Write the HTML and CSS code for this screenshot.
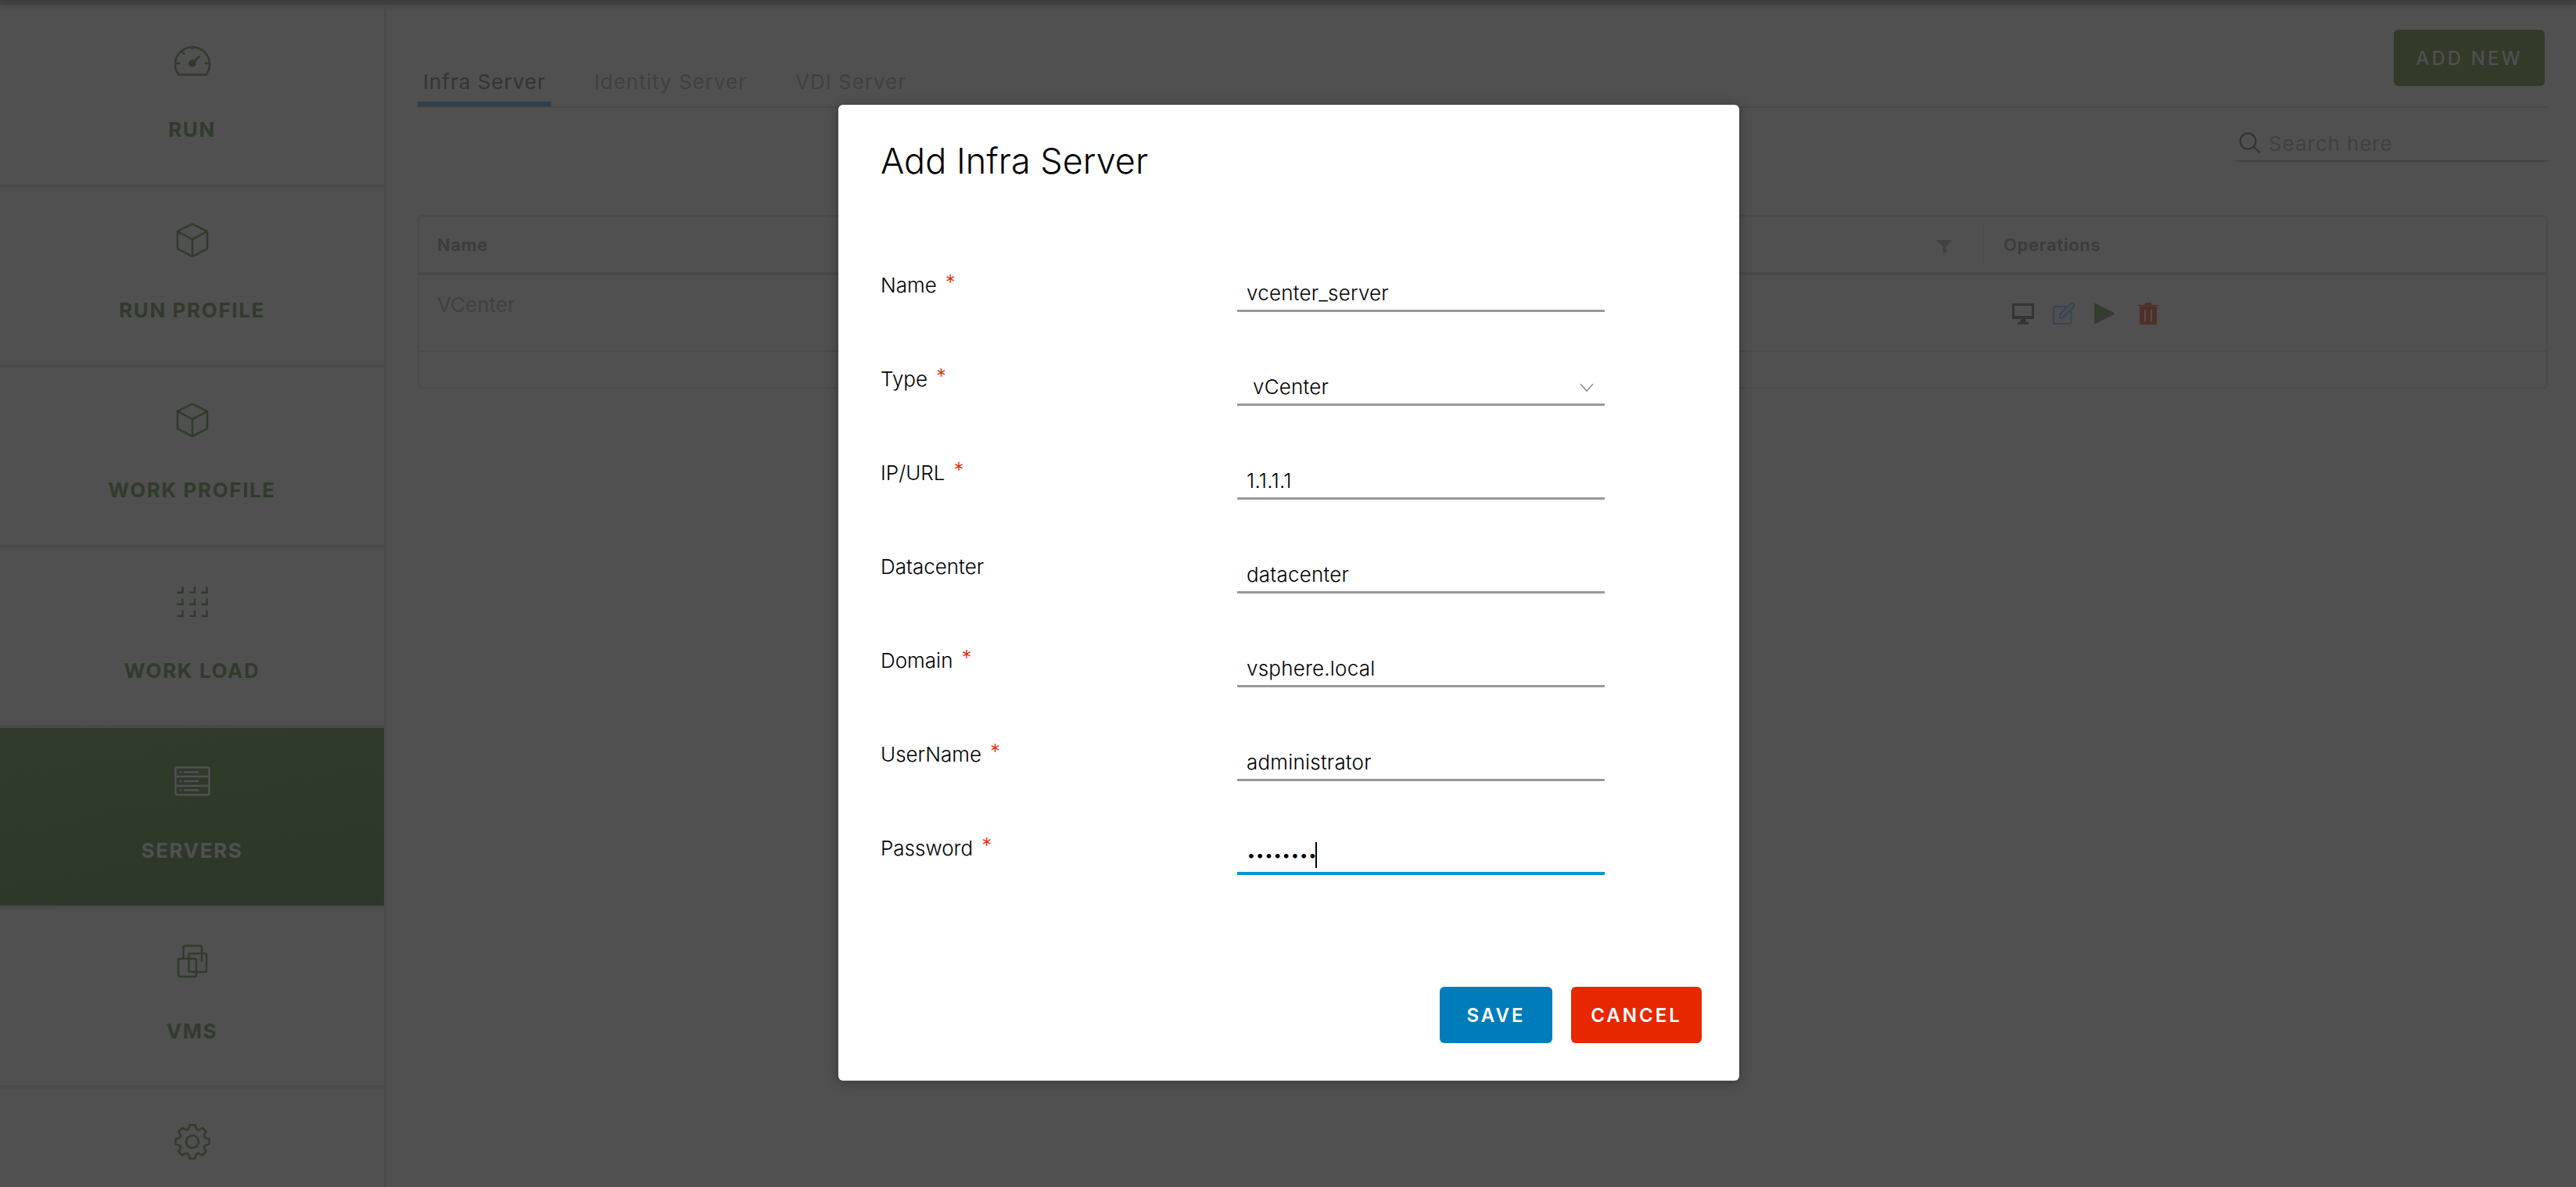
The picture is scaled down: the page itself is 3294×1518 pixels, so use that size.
FILE: index.html
```html
<!DOCTYPE html>
<html lang="en">
<head>
    <meta charset="UTF-8">
    <meta name="viewport" content="width=device-width, initial-scale=1.0">
    <title>Add Infra Server</title>
    <link rel="stylesheet" href="styles.css">
</head>
<body>
    <div class="topbar"></div>
    <div class="layout">
        <nav class="sidebar">
            <a class="nav-item">
                <svg class="nav-icon" viewBox="0 0 48 48"><path d="M6.5 42.5A22 22 0 1 1 41.5 42.5Z"/><path d="M24 5.5V10M2 28H8.5M39.500 28H46M10.500 12.500L14 16.500M24 28L33.500 18.500"/><circle class="dot" cx="24" cy="28" r="3.500"/></svg>
                <span class="nav-label">RUN</span>
            </a>
            <a class="nav-item">
                <svg class="nav-icon" viewBox="0 0 48 48"><path d="M24 2.500L43 12V34L24 44L5 34V12Z"/><path d="M5 12L24 22L43 12M24 22V44"/></svg>
                <span class="nav-label">RUN PROFILE</span>
            </a>
            <a class="nav-item">
                <svg class="nav-icon" viewBox="0 0 48 48"><path d="M24 2.500L43 12V34L24 44L5 34V12Z"/><path d="M5 12L24 22L43 12M24 22V44"/></svg>
                <span class="nav-label">WORK PROFILE</span>
            </a>
            <a class="nav-item">
                <svg class="nav-icon" viewBox="0 0 48 48"><path d="M4.500 12.700H11.500V5.500M20 12.700H27V5.500M35.500 12.700H42.500V5.500M4.500 27.700H11.500V20.500M20 27.700H27V20.500M35.500 27.700H42.500V20.500M4.500 42.700H11.500V35.500M20 42.700H27V35.500M35.500 42.700H42.500V35.500"/></svg>
                <span class="nav-label">WORK LOAD</span>
            </a>
            <a class="nav-item active">
                <svg class="nav-icon" viewBox="0 0 48 48"><rect x="2.500" y="6.500" width="43" height="35" rx="2"/><path d="M2.500 18H45.500M2.500 30H45.500M13 12.500H32M13 24H32M13 35.500H32"/><path d="M7.500 12.500H10M7.500 24H10M7.500 35.500H10"/></svg>
                <span class="nav-label">SERVERS</span>
            </a>
            <a class="nav-item">
                <svg class="nav-icon" viewBox="0 0 48 48"><rect x="6" y="20" width="23" height="23" rx="2.500"/><path d="M12.500 20V6A2.500 2.500 0 0 1 15 3.500H33.500A2.500 2.500 0 0 1 36 6V13"/><path d="M19.500 13.500H40A2 2 0 0 1 42 15.500V35A2 2 0 0 1 40 37H22A2.500 2.500 0 0 1 19.500 34.500V13.500M36 13.500V24"/></svg>
                <span class="nav-label">VMS</span>
            </a>
            <a class="nav-item">
                <svg class="nav-icon" viewBox="0 0 48 48">
                    <circle cx="24" cy="24" r="8"/>
                    <g transform="translate(24 24)">
                        <path id="tooth" d="M-6.500 -15L-4.800 -16.500L-3.200 -21.500H3.200L4.800 -16.500L6.500 -15"/>
                        <use href="#tooth" transform="rotate(45)"/>
                        <use href="#tooth" transform="rotate(90)"/>
                        <use href="#tooth" transform="rotate(135)"/>
                        <use href="#tooth" transform="rotate(180)"/>
                        <use href="#tooth" transform="rotate(225)"/>
                        <use href="#tooth" transform="rotate(270)"/>
                        <use href="#tooth" transform="rotate(315)"/>
                    </g>
                </svg>
            </a>
        </nav>

        <main class="content">
            <div class="tabs">
                <a class="tab selected">Infra Server</a>
                <a class="tab">Identity Server</a>
                <a class="tab">VDI Server</a>
                <button class="add-btn" type="button">ADD NEW</button>
            </div>

            <div class="search-row">
                <label class="search">
                    <svg class="search-icon" viewBox="0 0 30 28"><circle cx="12.500" cy="11.500" r="10"/><path d="M20 19L28 26.500"/></svg>
                    <input type="text" placeholder="Search here">
                </label>
            </div>

            <table class="grid">
                <thead>
                    <tr>
                        <th>Name</th>
                        <th class="filter-cell">
                            <svg class="filter-icon" viewBox="0 0 20 16"><path d="M0 0H20L13 8V16H8V8Z"/></svg>
                        </th>
                        <th class="ops-cell"><span class="ops-head">Operations</span></th>
                    </tr>
                </thead>
                <tbody>
                    <tr class="data-row">
                        <td>VCenter</td>
                        <td></td>
                        <td class="ops-cell">
                            <div class="ops">
                                <svg class="op" viewBox="0 0 28 28"><path fill="#343434" fill-rule="evenodd" d="M1 1H27A1 1 0 0 1 28 2V20A1 1 0 0 1 27 21H1A1 1 0 0 1 0 20V2A1 1 0 0 1 1 1ZM3 4V17H25V4Z"/><path fill="#343434" d="M11 21H17L18 25H21V28H7V25H10Z"/></svg>
                                <svg class="op" viewBox="0 0 28 28"><path fill="none" stroke="#344452" stroke-width="2" d="M17 5H2.500A1.500 1.500 0 0 0 1 6.500V25.500A1.500 1.500 0 0 0 2.500 27H22A1.500 1.500 0 0 0 23.500 25.500V11"/><path fill="none" stroke="#344452" stroke-width="2" d="M9 15L22.500 1.500A2 2 0 0 1 26.500 5.500L13 19L9 20Z"/></svg>
                                <svg class="op" viewBox="0 0 28 28"><path fill="#353c31" stroke="#353c31" stroke-width="2" stroke-linejoin="round" d="M2 2L26 14L2 26Z"/></svg>
                                <svg class="op trash" viewBox="0 0 28 28"><path fill="#4f2f29" fill-rule="evenodd" d="M3 5H25V26A2 2 0 0 1 23 28H5A2 2 0 0 1 3 26ZM9 9V24H11V9ZM17 9V24H19V9Z"/><path fill="#4f2f29" d="M1 3H9.500V1.500A1.500 1.500 0 0 1 11 0H17A1.500 1.500 0 0 1 18.500 1.500V3H27V4.500H1Z"/></svg>
                            </div>
                        </td>
                    </tr>
                    <tr class="empty-row"><td colspan="3"></td></tr>
                </tbody>
            </table>
        </main>
    </div>

    <div class="modal">
        <h3 class="modal-title">Add Infra Server</h3>
        <form class="modal-form">
            <div class="row">
                <label class="row-label required" for="name">Name</label>
                <input class="field" id="name" type="text" value="vcenter_server">
            </div>
            <div class="row">
                <label class="row-label required" for="type">Type</label>
                <div class="select-wrap">
                    <select class="field select" id="type">
                        <option>vCenter</option>
                    </select>
                    <svg class="chevron" viewBox="0 0 18 11"><path d="M1 1L9 10L17 1"/></svg>
                </div>
            </div>
            <div class="row">
                <label class="row-label required" for="url">IP/URL</label>
                <input class="field" id="url" type="text" value="1.1.1.1">
            </div>
            <div class="row">
                <label class="row-label" for="datacenter">Datacenter</label>
                <input class="field" id="datacenter" type="text" value="datacenter">
            </div>
            <div class="row">
                <label class="row-label required" for="domain">Domain</label>
                <input class="field" id="domain" type="text" value="vsphere.local">
            </div>
            <div class="row">
                <label class="row-label required" for="username">UserName</label>
                <input class="field" id="username" type="text" value="administrator">
            </div>
            <div class="row">
                <label class="row-label required" for="password">Password</label>
                <div class="password-wrap">
                    <input class="field password" id="password" type="password" value="password">
                    <span class="caret"></span>
                </div>
            </div>
        </form>
        <div class="modal-footer">
            <button class="btn save" type="button">SAVE</button>
            <button class="btn cancel" type="button">CANCEL</button>
        </div>
    </div>
</body>
</html>
```

FILE: styles.css
```css
/* Page behind the dialog, already drawn in its dimmed colours */
html,
body {
    height: 100%;
}

body {
    margin: 0;
    font-family: "Inter", "Liberation Sans", sans-serif;
    background-color: #505050;
    overflow: hidden;
    position: relative;
}

.topbar {
    height: 6px;
    background-color: #3f3f3f;
    box-shadow: 0 2px 6px rgba(0, 0, 0, 0.2);
}

.layout {
    display: flex;
    height: calc(100% - 6px);
}

/* Sidebar */
.sidebar {
    width: 491px;
    padding-top: 3px;
    border-right: 3px solid #4a4a4a;
    flex-shrink: 0;
    box-sizing: content-box;
    overflow: hidden;
}

.nav-item {
    display: flex;
    flex-direction: column;
    align-items: center;
    height: 226.5px;
    padding-top: 44px;
    box-sizing: border-box;
    margin-bottom: 4px;
    box-shadow: 0 4px 0 #4a4a4a;
    color: #303b2c;
}

.nav-item.active {
    background: linear-gradient(170deg, #303b2b, #2d3729);
    color: #505050;
}

.nav-icon {
    width: 48px;
    height: 48px;
    flex-shrink: 0;
    fill: none;
    stroke: currentColor;
    stroke-width: 2.500;
}

.nav-icon .dot {
    fill: currentColor;
}

.nav-label {
    margin-top: 50px;
    font-size: 26px;
    line-height: 30px;
    font-weight: 700;
    letter-spacing: 1.600px;
}

/* Main area */
.content {
    flex: 1;
    padding: 0 36px 0 40px;
    min-width: 0;
}

.tabs {
    display: flex;
    align-items: flex-end;
    gap: 48px;
    height: 130px;
    border-bottom: 2px solid #484848;
}

.tab {
    padding: 0 7px;
    height: 62px;
    line-height: 62px;
    box-sizing: border-box;
    font-size: 26px;
    letter-spacing: 1px;
    color: #404040;
}

.tab.selected {
    color: #343434;
    border-bottom: 6px solid #2f3f4b;
}

.add-btn {
    margin-left: auto;
    margin-right: 4px;
    align-self: flex-start;
    margin-top: 32px;
    width: 193px;
    height: 72px;
    border: none;
    border-radius: 6px;
    background-color: #323b2a;
    color: #505050;
    font-family: inherit;
    font-size: 24px;
    font-weight: 500;
    letter-spacing: 3.100px;
}

.search-row {
    display: flex;
    justify-content: flex-end;
    margin-top: 23px;
}

.search {
    display: flex;
    align-items: center;
    gap: 9px;
    width: 399px;
    height: 46px;
    padding-left: 3px;
    box-sizing: border-box;
    border-bottom: 2px solid #434343;
}

.search-icon {
    width: 30px;
    height: 28px;
    fill: none;
    stroke: #333;
    stroke-width: 2;
}

.search input {
    flex: 1;
    min-width: 0;
    border: none;
    background: transparent;
    outline: none;
    padding: 0;
    font-family: inherit;
    font-size: 26px;
    letter-spacing: 0.900px;
}

.search input::placeholder {
    color: #404040;
}

/* Table */
.grid {
    width: 100%;
    margin-top: 68px;
    border-collapse: separate;
    border-spacing: 0;
    border: 2px solid #4a4a4a;
    border-radius: 6px;
    color: #404040;
}

.grid th {
    height: 75px;
    padding: 0 0 0 23px;
    box-sizing: border-box;
    border-bottom: 4px solid #484848;
    text-align: left;
    font-size: 22px;
    font-weight: 600;
    letter-spacing: 0.700px;
    color: #3b3b3b;
}

.grid td {
    padding: 0 0 0 23px;
    font-size: 26px;
}

.filter-cell {
    text-align: right !important;
    padding-right: 40px !important;
}

.filter-icon {
    width: 20px;
    height: 16px;
    fill: #424242;
    vertical-align: middle;
}

.grid .ops-cell {
    width: 720px;
    padding-left: 0;
}

.ops-head {
    display: block;
    height: 48px;
    line-height: 48px;
    padding-left: 25px;
    border-left: 1px solid #4a4a4a;
}

.data-row td {
    height: 98px;
    padding-top: 22px;
    padding-bottom: 0;
    box-sizing: border-box;
    vertical-align: top;
    border-bottom: 2px solid #4a4a4a;
}

.ops {
    display: flex;
    gap: 24px;
    padding-left: 37px;
    margin-top: 13px;
}

.op {
    width: 28px;
    height: 28px;
}

.trash {
    margin-left: 4px;
}

.empty-row td {
    height: 45px;
}

/* Dialog */
.modal {
    position: absolute;
    left: 1072px;
    top: 134px;
    width: 1152px;
    height: 1248px;
    padding: 45px 0 48px 54px;
    box-sizing: border-box;
    display: flex;
    flex-direction: column;
    background-color: #fff;
    border-radius: 6px;
    box-shadow: 0 2px 16px rgba(0, 0, 0, 0.3);
    color: #000;
}

.modal-title {
    margin: 0;
    font-size: 45px;
    line-height: 54px;
    font-weight: 300;
}

.modal-form {
    margin-top: 107px;
}

.row {
    display: grid;
    grid-template-columns: 456px 470px;
    height: 120px;
}

.row-label {
    font-size: 26px;
    font-weight: 350;
    line-height: 50px;
    height: 50px;
}

.required::after {
    content: "*";
    color: #e62700;
    margin-left: 11px;
    position: relative;
    top: -4px;
}

.field {
    display: block;
    width: 100%;
    height: 59px;
    padding: 12px 0 0 12px;
    box-sizing: border-box;
    border: none;
    border-bottom: 3px solid #999;
    border-radius: 0;
    background: transparent;
    outline: none;
    font-family: inherit;
    font-size: 26px;
    font-weight: 350;
    letter-spacing: 0.200px;
    color: #000;
}

.select-wrap,
.password-wrap {
    position: relative;
    height: 59px;
}

.select {
    appearance: none;
    padding-left: 20px;
}

.chevron {
    position: absolute;
    right: 14px;
    top: 30px;
    width: 18px;
    height: 11px;
    fill: none;
    stroke: #8c8c8c;
    stroke-width: 1.500;
}

.password {
    border-bottom: 4px solid #0095d3;
    font-size: 21px;
    letter-spacing: -0.600px;
}

.caret {
    position: absolute;
    left: 100px;
    top: 17px;
    width: 2px;
    height: 33px;
    background-color: #000;
}

.modal-footer {
    margin-top: auto;
    padding-right: 48px;
    display: flex;
    justify-content: flex-end;
    gap: 24px;
}

.btn {
    height: 72px;
    padding-top: 2px;
    border: none;
    border-radius: 6px;
    color: #fff;
    font-family: inherit;
    font-size: 24px;
    font-weight: 600;
    letter-spacing: 3px;
}

.save {
    width: 144px;
    background-color: #007cbb;
}

.cancel {
    width: 167px;
    background-color: #e62700;
}
```
